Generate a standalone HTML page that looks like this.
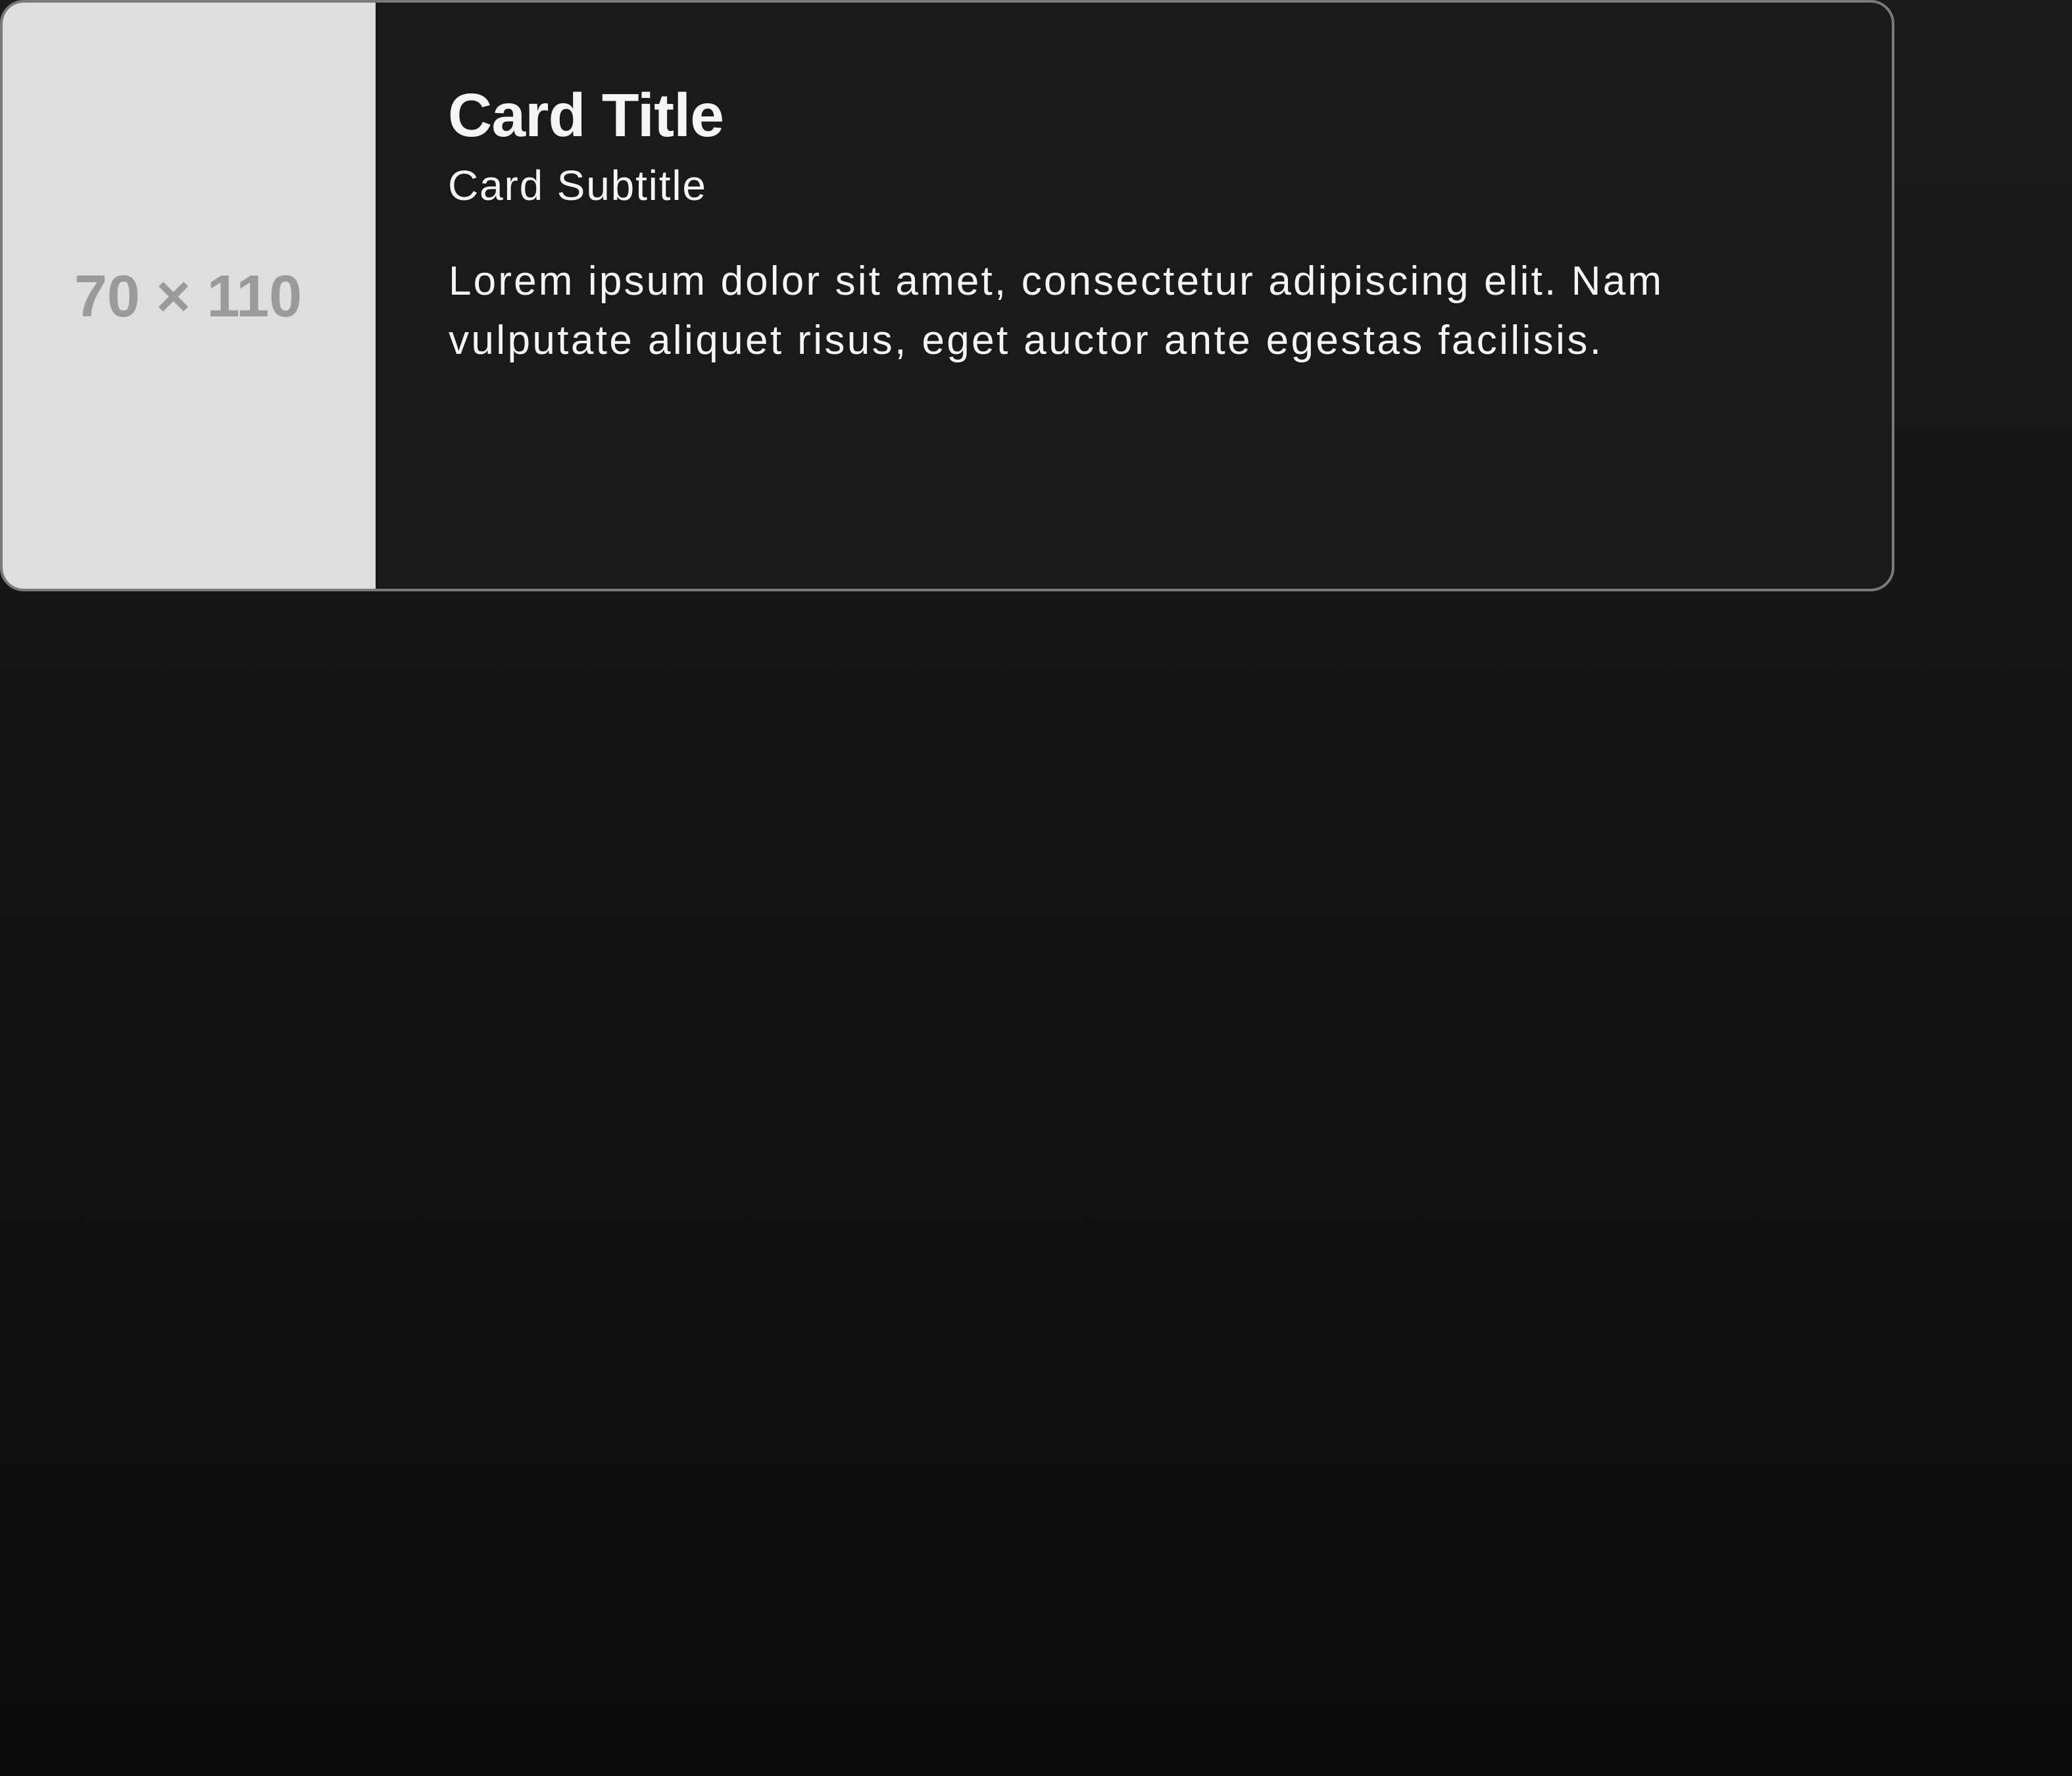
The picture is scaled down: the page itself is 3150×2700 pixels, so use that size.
<!DOCTYPE html>
<html><head><meta charset="utf-8"><style>
html,body{margin:0;padding:0;}
body{width:3150px;height:2700px;background:linear-gradient(#1b1b1b,#0c0c0c);position:relative;overflow:hidden;font-family:"Liberation Sans",Arial,sans-serif;}
.card{position:absolute;left:0;top:0;width:2872px;height:891px;border:4px solid #7a7a7a;border-radius:36px;background:#1a1a1a;overflow:hidden;}
.img{position:absolute;left:0;top:0;width:567px;height:100%;background:#dedede;}
.t{position:absolute;white-space:nowrap;line-height:1.15;}
</style></head><body>
<div class="card"><div class="img"></div></div>
<div class="t fit" data-w="346" style="left:113px;top:400px;font-size:90px;font-weight:bold;color:#9a9a9a;">70 × 110</div>
<div class="t fit" data-w="420" style="left:681px;top:122px;font-size:93px;font-weight:bold;color:#f5f5f5;">Card Title</div>
<div class="t fit" data-w="392" style="left:681px;top:246px;font-size:64px;color:#f5f5f5;">Card Subtitle</div>
<div class="t fit" data-w="1844" style="left:682px;top:392px;font-size:62px;color:#f5f5f5;">Lorem ipsum dolor sit amet, consectetur adipiscing elit. Nam</div>
<div class="t fit" data-w="1752" style="left:682px;top:482px;font-size:62px;color:#f5f5f5;">vulputate aliquet risus, eget auctor ante egestas facilisis.</div>
<script>
document.querySelectorAll('.fit').forEach(function(e){
  var w=e.getBoundingClientRect().width, n=e.textContent.length;
  var target=+e.dataset.w;
  if(n>1){e.style.letterSpacing=((target-w)/(n-1))+'px';}
});
</script>
</body></html>
